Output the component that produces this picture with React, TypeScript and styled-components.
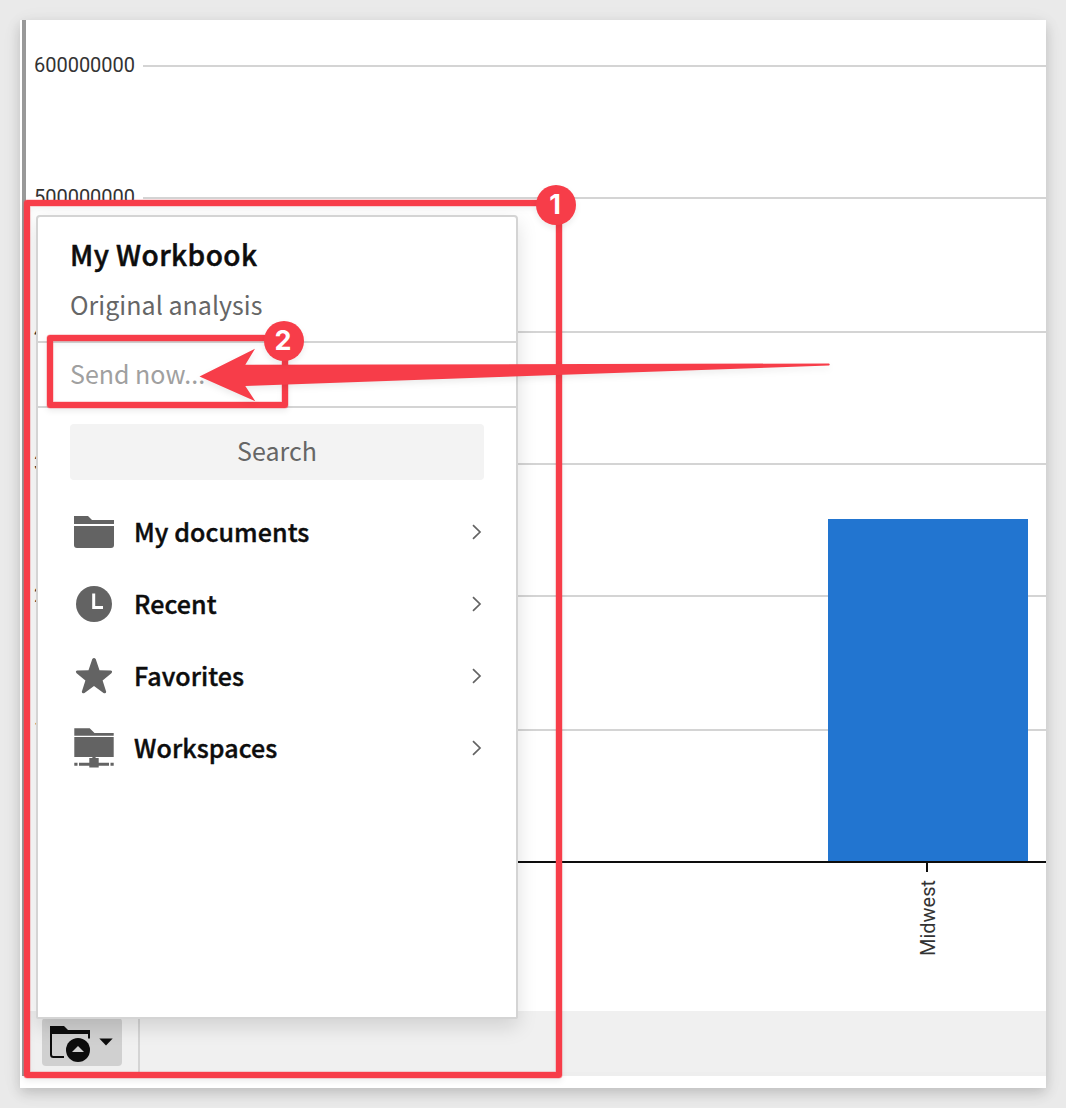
import React from 'react';
import styled, { createGlobalStyle } from 'styled-components';

const RED = '#f73d49';
const UI_FONT = '"Noto Sans CJK SC", "Noto Sans", sans-serif';

const GlobalStyle = createGlobalStyle`
  *, *::before, *::after { box-sizing: border-box; }
  html, body { margin: 0; padding: 0; background: #eaeaea; }
`;

const Page = styled.div`
  position: relative;
  width: 1066px;
  height: 1108px;
  padding: 20px;
  overflow: hidden;
  background: #eaeaea;
`;

const Window = styled.main`
  display: flex;
  height: 1068px;
  padding: 0 0 12px 2px;
  background: #fff;
  box-shadow: 0 5px 12px rgba(0, 0, 0, 0.17), 0 3px 24px rgba(0, 0, 0, 0.04);
`;

const SideRule = styled.div`
  flex: 0 0 4px;
  background: #999;
`;

const Content = styled.div`
  flex: 1;
  display: flex;
  flex-direction: column;
  min-width: 0;
`;

const Chart = styled.svg`
  display: block;
  flex: 0 0 991px;
  width: 1020px;
  height: 991px;
  font: 400 20px Roboto, sans-serif;
  fill: #333;
`;

const Footer = styled.footer`
  flex: 1;
  display: flex;
  align-items: stretch;
  padding-left: 16px;
  background: #f0f0f0;
  border-bottom: 4px solid #eee;
`;

const FolderButton = styled.button`
  display: flex;
  align-items: center;
  width: 80px;
  height: 48px;
  margin: 7px 16px 0 0;
  padding: 0 0 0 8px;
  border: 0;
  border-radius: 4px;
  background: #d0d0d0;
`;

const FooterDivider = styled.div`
  width: 2px;
  margin-bottom: -4px;
  background: #d4d4d4;
`;

const Menu = styled.aside`
  position: absolute;
  left: 36px;
  top: 215px;
  width: 482px;
  height: 804px;
  border: 2px solid #d4d4d4;
  border-radius: 4px 4px 2px 2px;
  background: #fff;
  box-shadow: 0 8px 20px rgba(0, 0, 0, 0.13);
  font-family: ${UI_FONT};
  color: #0d0d0d;
`;

const MenuHeader = styled.header`
  height: 126px;
  padding: 17px 32px 0;
  border-bottom: 2px solid #d4d4d4;
`;

const Title = styled.h1`
  margin: 0;
  font-size: 28px;
  font-weight: 500;
  line-height: 40px;
  letter-spacing: 0.43px;
  -webkit-text-stroke: 0.5px currentColor;
`;

const Subtitle = styled.p`
  margin: 10px 0 0;
  font-size: 25px;
  line-height: 40px;
  letter-spacing: 0.03px;
  color: #666;
`;

const SendRow = styled.div`
  height: 65px;
  padding-left: 32px;
  border-bottom: 2px solid #d4d4d4;
  font-size: 25px;
  line-height: 61px;
  color: #a0a0a0;
`;

const Search = styled.div`
  height: 56px;
  margin: 16px 32px;
  border-radius: 4px;
  background: #f3f3f3;
  font-size: 25px;
  line-height: 53px;
  text-align: center;
  color: #666;
`;

const Row = styled.div`
  display: flex;
  align-items: center;
  height: 72px;
  padding: 0 32px;
`;

const RowLabel = styled.span`
  flex: 1;
  padding: 0 0 2px 16px;
  font-size: 25px;
  font-weight: 500;
  line-height: 40px;
  letter-spacing: 0.08px;
  -webkit-text-stroke: 0.4px currentColor;
`;

const Icon = styled.svg`
  display: block;
  flex: none;
`;

const Callout = styled.div<{ $x: number; $y: number; $w: number; $h: number }>`
  position: absolute;
  left: ${p => p.$x}px;
  top: ${p => p.$y}px;
  width: ${p => p.$w}px;
  height: ${p => p.$h}px;
  border: 6px solid ${RED};
  border-radius: 3px;
  box-shadow: 0 0 0 0.5px rgba(247, 61, 73, 0.4), 0 3px 6px rgba(0, 0, 0, 0.08),
    inset 0 0 0 0.5px rgba(247, 61, 73, 0.4), inset 0 3px 6px rgba(0, 0, 0, 0.05);
`;

const Badge = styled.div<{ $x: number; $y: number }>`
  position: absolute;
  left: ${p => p.$x}px;
  top: ${p => p.$y}px;
  width: 40px;
  height: 40px;
  padding-right: 1px;
  border-radius: 50%;
  background: ${RED};
  box-shadow: 0 3px 6px rgba(0, 0, 0, 0.08);
  color: #fff;
  font: 700 27px/39px Inter, sans-serif;
  text-align: center;
`;

const Arrow = styled.svg`
  position: absolute;
  left: 190px;
  top: 335px;
  filter: drop-shadow(0 3px 3px rgba(0, 0, 0, 0.08));
`;

const ticks = [
  { label: '600000000', y: 46 },
  { label: '500000000', y: 178 },
  { label: '400000000', y: 312 },
  { label: '300000000', y: 444 },
  { label: '200000000', y: 576 },
  { label: '100000000', y: 710 },
];

const BarChart = () => (
  <Chart viewBox="0 0 1020 991">
    {ticks.map(t => (
      <g key={t.label}>
        <text x="8" y={t.y + 6} textLength="101">{t.label}</text>
        <rect x="117" y={t.y - 1} width="903" height="2" fill="#d4d4d4" />
      </g>
    ))}
    <rect x="802" y="499" width="200" height="343" fill="#2275d0" />
    <rect x="117" y="841" width="903" height="2" fill="#0d0d0d" />
    <rect x="900" y="843" width="2" height="9" fill="#0d0d0d" />
    <text transform="translate(908.500 936) rotate(-90)" textLength="76">Midwest</text>
  </Chart>
);

const FolderIcon = () => (
  <Icon width="48" height="48" viewBox="0 0 48 48" fill="#636363">
    <path d="M4 8h14l4 4h22v4H4z" />
    <path d="M4 18h40v19a3 3 0 0 1-3 3H7a3 3 0 0 1-3-3z" />
  </Icon>
);

const ClockIcon = () => (
  <Icon width="48" height="48" viewBox="0 0 48 48">
    <circle cx="24" cy="24" r="18" fill="#636363" />
    <path d="M23.700 13.500v14h9.300" fill="none" stroke="#fff" strokeWidth="3" />
  </Icon>
);

const StarIcon = () => (
  <Icon width="48" height="48" viewBox="0 0 48 48" fill="#636363">
    <path d="M22.300 7q1.700-2 3.400 0l3.800 11.200 11.500.3q2 .9.4 2.700l-8.800 7.300 3.600 11.300q-.3 2.200-2.700 1.200L24 34l-9.500 7q-2.400 1-2.700-1.200l3.600-11.300-8.800-7.300q-1.600-1.800.4-2.700l11.500-.3z" />
  </Icon>
);

const WorkspaceIcon = () => (
  <Icon width="48" height="48" viewBox="0 0 48 48" fill="#636363">
    <path d="M4.300 4.300h15.400L24.500 9h19.200v2.700H4.300z" />
    <path d="M4.300 13.100h39.400V33H25.600v1.100h3.100v4.700H39v2.900H28.700v1.700h-9.400v-1.700H9v-2.900h10.300v-4.700h3.100V33H4.300z" />
    <path d="M4.300 38.800h3.200v2.900H4.300zM40.500 38.800h3.200v2.900h-3.200z" />
  </Icon>
);

const Chevron = () => (
  <Icon width="16" height="16" viewBox="0 0 16 16">
    <path d="M5 1.200 12 8l-7 6.800" fill="none" stroke="#636363" strokeWidth="1.700" />
  </Icon>
);

const items = [
  { label: 'My documents', icon: FolderIcon },
  { label: 'Recent', icon: ClockIcon },
  { label: 'Favorites', icon: StarIcon },
  { label: 'Workspaces', icon: WorkspaceIcon },
];

export default function App() {
  return (
    <>
      <GlobalStyle />
      <Page>
        <Window>
          <SideRule />
          <Content>
            <BarChart />
            <Footer>
              <FolderButton aria-label="Open documents">
                <Icon width="64" height="40" viewBox="0 0 64 40">
                  <path d="M0 4h14l4 4h22v8.500h-2V12H2v20.500q0 1.500 1.500 1.500H14v2H3.500Q0 36 0 32.500z" fill="#0d0d0d" />
                  <circle cx="28" cy="28" r="12" fill="#0d0d0d" />
                  <path d="M22 30l6-6 6 6z" fill="#d0d0d0" />
                  <path d="M49.300 16.400h13.400L56 23.400z" fill="#0d0d0d" />
                </Icon>
              </FolderButton>
              <FooterDivider />
            </Footer>
          </Content>
        </Window>

        <Menu>
          <MenuHeader>
            <Title>My Workbook</Title>
            <Subtitle>Original analysis</Subtitle>
          </MenuHeader>
          <SendRow>Send now...</SendRow>
          <Search>Search</Search>
          {items.map(({ label, icon: Glyph }) => (
            <Row key={label}>
              <Glyph />
              <RowLabel>{label}</RowLabel>
              <Chevron />
            </Row>
          ))}
        </Menu>

        <Callout $x={24} $y={200} $w={537.5} $h={877.5} />
        <Callout $x={47.4} $y={335.4} $w={240.6} $h={72.4} />
        <Arrow width="650" height="80" viewBox="190 335 650 80">
          <path d="M199.500 376.500 255 348.700l-9.700 16L829 363.500q1.500 1 0 2L245.300 386l10 15.300z" fill={RED} />
        </Arrow>
        <Badge $x={535.6} $y={185}>1</Badge>
        <Badge $x={263.6} $y={321.4}>2</Badge>
      </Page>
    </>
  );
}
